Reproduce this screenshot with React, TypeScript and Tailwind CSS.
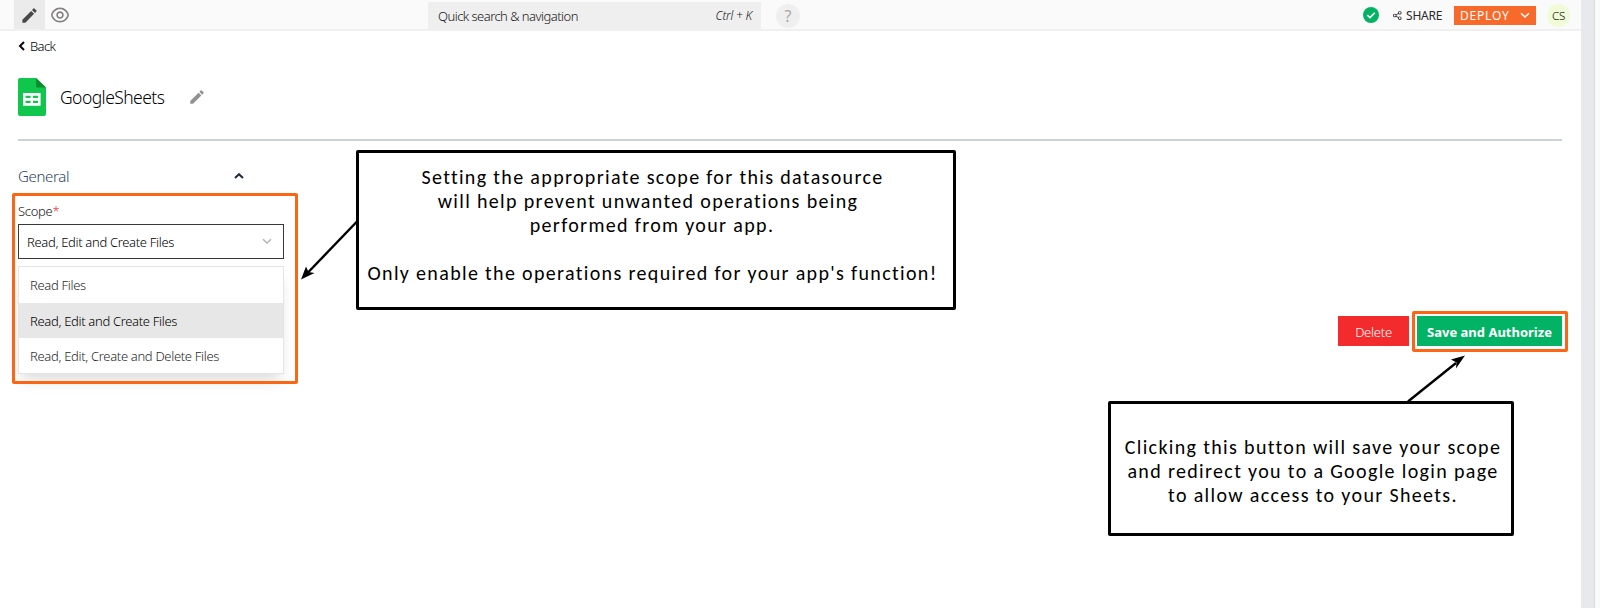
import type { ReactNode } from "react";
import { MdEdit } from "react-icons/md";
import { RiEyeLine, RiShareLine } from "react-icons/ri";

function Chevron({ className, d = "M1 1.2 5 5 9 1.2", width = 1.5 }: { className: string; d?: string; width?: number }) {
  return (
    <svg viewBox="0 0 10 6.2" className={className} fill="none" stroke="currentColor" strokeWidth={width}>
      <path d={d} />
    </svg>
  );
}

function SheetsLogo() {
  return (
    <svg viewBox="0 0 28 38" className="h-[38px] w-7">
      <path d="M2 0h16l10 9.5V36a2 2 0 0 1-2 2H2a2 2 0 0 1-2-2V2a2 2 0 0 1 2-2z" fill="#10c64c" />
      <path d="M18 0l10 9.5H19a1 1 0 0 1-1-1z" fill="#0b8f2c" />
      <path fillRule="evenodd" fill="#fff" d="M5 15h17.6v12.8H5zM7.6 17.8v2.3h5v-2.3zM15 17.8v2.3h5v-2.3zM7.6 22.7V25h5v-2.3zM15 22.7V25h5v-2.3z" />
    </svg>
  );
}

function TopBar() {
  return (
    <header className="flex h-[31px] items-start border-b-2 border-[#f0f0f0] bg-[#fafafa] pl-[14px]">
      <button className="flex h-[29px] w-[31px] items-center justify-center bg-[#ebebeb] pt-px text-[#4b4848]">
        <MdEdit className="size-[19px]" />
      </button>
      <button className="mt-[5px] ml-[5px] text-[#858282]">
        <RiEyeLine className="size-[20px]" />
      </button>
      <div className="mt-[2px] ml-[358px] flex h-[27px] w-[333px] items-center justify-between bg-[#efefef] pr-[9px] pl-[10px] text-[#191717]">
        <span className="pt-[3px] text-[13px] font-light tracking-[-0.54px]">Quick search &amp; navigation</span>
        <span className="pt-px text-[12px] font-light tracking-[-0.2px] italic">Ctrl + K</span>
      </div>
      <div className="mt-[4px] ml-[15px] flex size-6 items-center justify-center rounded-full bg-[#efefef] text-[16px] text-[#a9a7a7]">?</div>
      <div className="ml-auto flex h-[30px] items-center pr-[11px]">
        <svg viewBox="0 0 16 16" className="size-4">
          <circle cx="8" cy="8" r="8" fill="#03b365" />
          <path d="M4.3 8.2 7 10.6l4.8-4.8" fill="none" stroke="#fff" strokeWidth="1.6" />
        </svg>
        <RiShareLine className="ml-[13px] size-[11px] text-[#393939]" />
        <span className="ml-[3px] w-[48px] pt-[2px] text-[12px] tracking-[-0.2px] text-[#292929]">SHARE</span>
        <button className="flex h-[19px] w-[82px] items-center justify-between bg-[#f86a2b] pr-[6px] pl-[6px] text-white">
          <span className="pt-px text-[12px] tracking-[0.8px]">DEPLOY</span>
          <Chevron className="w-[10px]" />
        </button>
        <span className="ml-[11px] flex size-[23px] items-center justify-center rounded-full bg-[#f0fbd8] pt-px text-[11.5px] font-light tracking-[-0.2px] text-black">CS</span>
      </div>
    </header>
  );
}

const options = ["Read Files", "Read, Edit and Create Files", "Read, Edit, Create and Delete Files"];

function ScopeField() {
  return (
    <section className="relative mt-[23px] w-[266px]">
      <div className="flex h-[24px] items-center justify-between pr-[40px]">
        <h2 className="pt-px text-[15px] font-light tracking-[-0.35px] text-[#2e4460]">General</h2>
        <Chevron className="w-[10px] text-[#1d2b3c]" d="M1 5 5 1.2 9 5" width={2} />
      </div>
      <div className="absolute top-[29px] -left-[6px] h-[191px] w-[286px] rounded-[2px] border-[3px] border-[#fb6514]" />
      <label className="mt-[12px] block h-[20px] text-[13px] leading-[22px] font-light tracking-[-0.3px] text-[#191717]">
        Scope<span className="text-[#f22b2b]">*</span>
      </label>
      <div className="mt-[4px] flex h-[35px] items-center justify-between border border-[#393939] pr-[11px] pl-[8px] text-[13px] font-light tracking-[-0.32px] text-black">
        <span className="pt-[3px]">Read, Edit and Create Files</span>
        <Chevron className="w-[10px] text-[#b3b3b3]" />
      </div>
      <ul className="mt-[7px] border border-[#e3e5e5] bg-white shadow-[0_10px_14px_-4px_rgba(0,0,0,0.14)]">
        {options.map((option, index) => (
          <li
            key={option}
            className={
              index === 1
                ? "h-[35px] bg-[#e7e7e7] pl-[11px] text-[13px] leading-[37px] font-light tracking-[-0.32px] text-black"
                : "h-[35.5px] pl-[11px] text-[13px] leading-[37px] font-light tracking-[-0.32px] text-[#2b2929]"
            }
          >
            {option}
          </li>
        ))}
      </ul>
    </section>
  );
}

function Callout({ className, children }: { className: string; children: ReactNode }) {
  return (
    <div className={`absolute rounded-[2px] border-[3px] border-black bg-white text-center font-[Carlito,Lato,sans-serif] text-[20px] leading-[24.1px] tracking-[1.34px] whitespace-nowrap text-black ${className}`}>
      {children}
    </div>
  );
}

export default function App() {
  return (
    <div className="relative flex h-[608px] w-[1600px] overflow-hidden bg-white font-['Noto_Sans',sans-serif]">
      <main className="flex w-[1581px] flex-col">
        <TopBar />
        <div className="flex flex-col pr-[19px] pl-[18px]">
          <button className="mt-[5px] flex h-[20px] items-center text-[13px] font-light tracking-[-0.6px] text-black">
            <svg viewBox="0 0 7 10" className="mr-[5px] h-[10px] w-[7px]" fill="none" stroke="#090707" strokeWidth="2">
              <path d="M6 1 2 5l4 4" />
            </svg>
            <span className="pt-[2px]">Back</span>
          </button>
          <div className="mt-[22px] flex h-[38px] items-center">
            <SheetsLogo />
            <h1 className="ml-[14px] w-[128px] text-[17.5px] font-light tracking-[-0.55px] text-black">GoogleSheets</h1>
            <MdEdit className="size-[18px] text-[#939090]" />
          </div>
          <hr className="mt-[23px] h-[2px] border-0 bg-[#ccd2d9]" />
          <ScopeField />
        </div>
        <div className="-mt-[58px] flex gap-[8px] self-end pr-[19px]">
          <button className="h-[30px] w-[71px] border border-[#f22b2b] bg-[#f32b2c] pt-[3px] text-[13px] font-light tracking-[-0.25px] text-white">Delete</button>
          <div className="relative">
            <div className="absolute -top-[5px] -left-[5px] h-[41px] w-[156px] rounded-[2px] border-[3px] border-[#fb6514]" />
            <button className="h-[30px] w-[145px] bg-[#03b365] pt-[3px] text-[13px] font-bold text-white">Save and Authorize</button>
          </div>
        </div>
      </main>
      <aside className="w-[14px] border-r border-[#d9dbe0] bg-[#e8e9ed]" />
      <div className="flex-1 bg-[#fafafb]" />

      <Callout className="top-[150px] left-[356px] h-[160px] w-[600px] pt-[12px]">
        <p className="pr-[7px]">Setting the appropriate scope for this datasource</p>
        <p className="pr-[16px]">will help prevent unwanted operations being</p>
        <p className="pr-[8px]">performed from your app.</p>
        <p className="mt-[24px] pr-[7px]">Only enable the operations required for your app's function!</p>
      </Callout>
      <Callout className="top-[401px] left-[1108px] h-[135px] w-[406px] pt-[31px] pl-[4px]">
        <p>Clicking this button will save your scope</p>
        <p>and redirect you to a Google login page</p>
        <p>to allow access to your Sheets.</p>
      </Callout>
      <svg viewBox="0 0 58 60" className="absolute top-[220px] left-[300px] h-[60px] w-[58px]">
        <path d="M57 1.500 8 52.500" stroke="#000" strokeWidth="2.4" />
        <path d="M1 59.500 6 46.500l2.500 5.500 6 1z" fill="#000" />
      </svg>
      <svg viewBox="0 0 60 50" className="absolute top-[354px] left-[1406px] h-[50px] w-[60px]">
        <path d="M2 47.500 50 9" stroke="#000" strokeWidth="2.4" />
        <path d="M59 1.500 45 5.500l5.500 3-.5 6z" fill="#000" />
      </svg>
    </div>
  );
}
